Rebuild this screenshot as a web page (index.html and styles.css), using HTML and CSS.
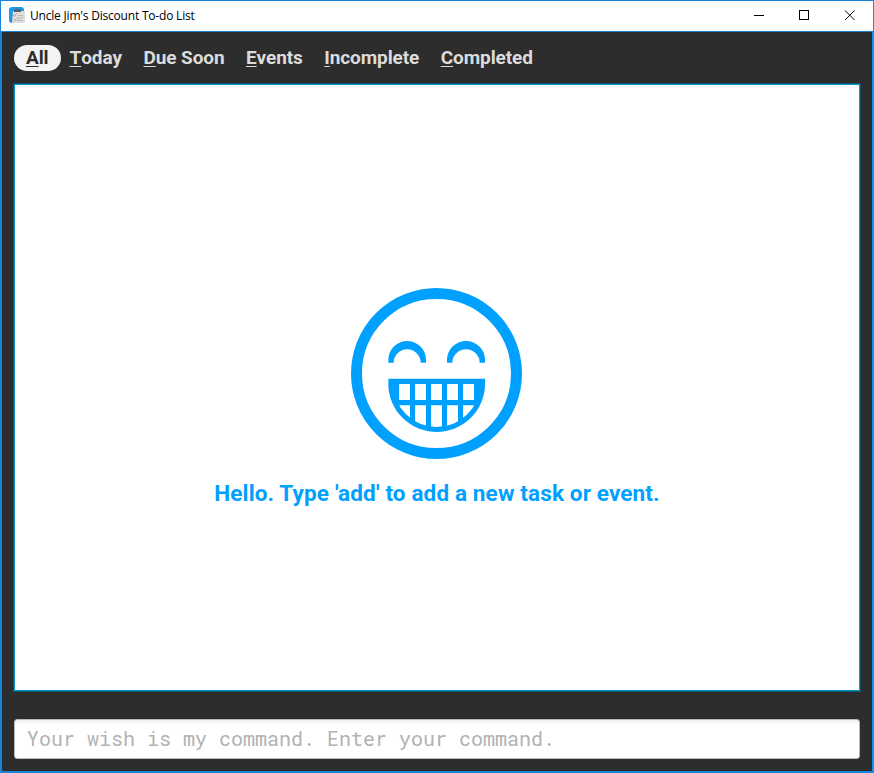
FILE: index.html
```html
<!DOCTYPE html>
<html lang="en">
<head>
<meta charset="utf-8">
<title>Uncle Jim's Discount To-do List</title>
<link rel="stylesheet" href="styles.css">
</head>
<body>
<div class="window">
  <header class="titlebar">
    <svg class="app-icon" width="16" height="17" viewBox="0 0 16 17">
      <rect width="15" height="16" rx="3" fill="#1a9be8"/>
      <path d="M4 4h11l1 1v10l-1 1H3z" fill="#dedede"/>
      <path d="M5 3l2-1h3l2 1v2H5z" fill="#53616a"/>
      <path d="M4 8l1.500 1.500 2-3M5 12.500l1 1 1.500-2" fill="none" stroke="#e77c78"/>
      <path d="M9 8.5h5M8 11h6M8 13.5h6" stroke="#b5b7b8"/>
    </svg>
    <span class="title">Uncle Jim's Discount To-do List</span>
    <svg class="controls" width="102" height="11" viewBox="0 0 102 11" fill="none" stroke="#000">
      <path d="M0 5.5h10M45.5.5h9v9h-9z" shape-rendering="crispEdges"/>
      <path d="M91 .5l9.5 9.5M100.500 .5L91 10"/>
    </svg>
  </header>
  <main class="content">
    <nav class="tabs">
      <span class="tab active"><span class="key">A</span>ll</span>
      <span class="tab"><span class="key">T</span>oday</span>
      <span class="tab"><span class="key">D</span>ue Soon</span>
      <span class="tab"><span class="key">E</span>vents</span>
      <span class="tab"><span class="key">I</span>ncomplete</span>
      <span class="tab"><span class="key">C</span>ompleted</span>
    </nav>
    <section class="panel">
      <svg class="smiley" width="171" height="171" viewBox="33 24 513 513" fill="#00a0ff">
        <defs><clipPath id="teeth"><path d="M160 300H420V311A130 130 0 0 1 160 311Z"/></clipPath></defs>
        <circle cx="289.500" cy="280.500" r="240" fill="none" stroke="#00a0ff" stroke-width="33"/>
        <path d="M145 248v-9a56.500 56 0 0 1 113 0v9h-16a40.500 40 0 0 0-81 0z"/>
        <path d="M321 248v-9a57 56 0 0 1 114 0v9h-16a41 40 0 0 0-82 0z"/>
        <path d="M145 296H435V311A145 145 0 0 1 145 311Z"/>
        <path clip-path="url(#teeth)" fill="#fff" d="M177 312h33v48h-33zM225 312h33v48h-33zM273 312h33v48h-33zM321 312h33v48h-33zM369 312h33v48h-33zM170 376h40v70h-40zM225 376h33v70h-33zM273 376h33v70h-33zM321 376h33v70h-33zM369 376h40v70h-40z"/>
      </svg>
      <p class="message">Hello. Type 'add' to add a new task or event.</p>
    </section>
    <input class="command" type="text" placeholder="Your wish is my command. Enter your command.">
  </main>
</div>
</body>
</html>
```
FILE: styles.css
```css
* { box-sizing: border-box; }
body { margin: 0; }
.window {
  display: flex;
  flex-direction: column;
  width: 874px;
  height: 773px;
  background: #2d2d2d;
  border: solid #1883d7;
  border-width: 1px 2px 2px;
  border-right-color: #0c95f5;
}
.titlebar {
  display: flex;
  align-items: center;
  flex: none;
  height: 31px;
  margin: 0 -1px;
  padding: 0 17px 1px 8px;
  background: #fff;
  border-bottom: 1px solid #1883d7;
}
.app-icon { margin-right: 5px; }
.title {
  font: 12px/16px "Open Sans", sans-serif;
  letter-spacing: -0.2px;
  color: #000;
}
.controls { margin-left: auto; }
.content {
  display: flex;
  flex-direction: column;
  flex: 1;
  padding: 13px 11px 12px;
}
.tabs {
  display: flex;
  height: 26px;
  margin: 0 0 12px 1px;
  color: #dcdcdc;
  font: 700 19px/26px Roboto, sans-serif;
  font-kerning: none;
  letter-spacing: -0.1px;
}
.tab { padding: 0 12.5px 0 9px; white-space: nowrap; }
.tab.active {
  padding: 0 12px;
  border-radius: 13px;
  background: #f3f3f3;
  color: #2d2d2d;
}
.key {
  text-decoration: underline;
  text-decoration-thickness: 1px;
  text-underline-offset: 2px;
  text-decoration-skip-ink: none;
}
.panel {
  display: flex;
  flex-direction: column;
  align-items: center;
  height: 609px;
  padding: 204px 2px 0 0;
  background: #fff;
  border: 1px solid #10566b;
  box-shadow: inset 0 0 0 1px #0096c9;
}
.smiley { flex: none; }
.message {
  margin: 18px 0 0 2px;
  color: #00a0ff;
  font: bold 22.5px/32px Roboto, sans-serif;
  letter-spacing: 0.14px;
}
.command {
  height: 40px;
  margin: 27px 1px 0;
  padding: 0 12px 2px;
  border: 1px solid #b9b9b9;
  border-radius: 3px;
  background: linear-gradient(#f0f0f0, #fff 5px);
  font: 20px/36px "Roboto Mono", "DejaVu Sans Mono", monospace;
}
.command::placeholder { color: #b2b2b2; opacity: 1; }
```
